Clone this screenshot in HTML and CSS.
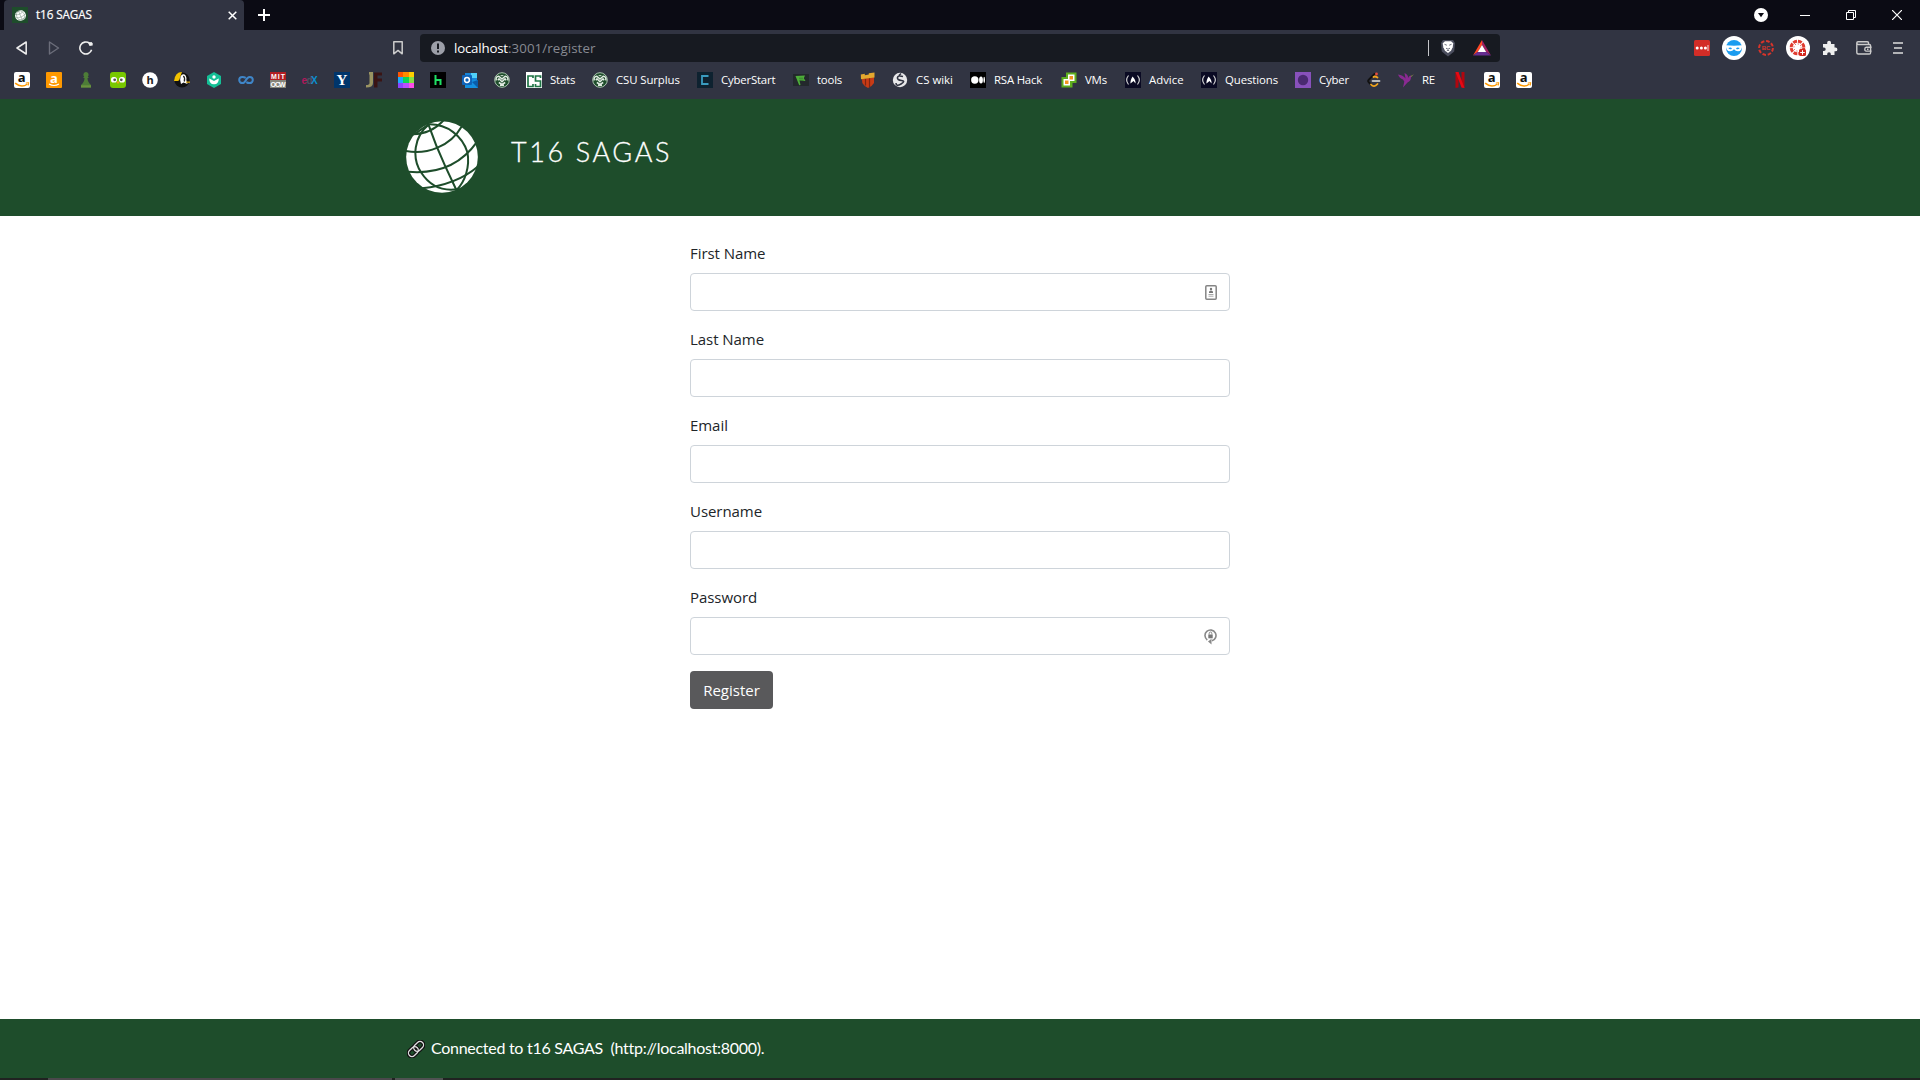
FILE: index.html
```html
<!DOCTYPE html>
<html lang="en">
<head>
<meta charset="utf-8">
<title>t16 SAGAS</title>
<link rel="stylesheet" href="styles.css">
</head>
<body>
<svg class="defs" aria-hidden="true">
  <symbol id="globe" viewBox="80 79 213 214">
    <circle cx="186.5" cy="186" r="106.5" fill="#fff"/>
    <g fill="none" stroke="#1e4d2b" stroke-width="6">
      <path d="M145 86Q168 153 196 213L232 290"/>
      <path d="M98 118Q154 119 192 76"/>
      <path d="M78 168C142 181 212 153 245 95"/>
      <path d="M86 230C170 237 242 210 290 142"/>
      <path d="M127 279C190 273 250 252 295 213"/>
      <path d="M147 89C104 125 95 187 125 233C151 273 188 288 232 282"/>
      <path d="M147 89C203 88 247 124 262 172C270 216 255 259 230 284"/>
      <path d="M147 89L108 116"/>
    </g>
  </symbol>
  <symbol id="amazon" viewBox="0 0 16 16" overflow="visible">
    <rect width="16" height="16" rx="2" fill="#fff"/>
    <text x="7.6" y="10.4" text-anchor="middle" class="fav-a">a</text>
    <path d="M1.2 11.2Q7.5 16.4 13.5 12" fill="none" stroke="#f90" stroke-width="1.5"/>
    <path d="M11.8 11.1l3-.5-.6 3" fill="none" stroke="#f90"/>
  </symbol>
  <symbol id="ram" viewBox="0 0 16 16">
    <circle cx="8" cy="8" r="7.3" fill="#1e4d2b" stroke="#a9c4ae" stroke-width="1"/>
    <g fill="none" stroke="#e3ece4" stroke-width="1.5">
      <path d="M2.200 8.500Q1.500 4.500 4.800 4.200L8 7l3.200-2.800Q14.500 4.500 13.800 8.500"/>
      <path d="M3.800 8.200L5 6.800l3 3 3-3 1.200 1.400"/>
      <path d="M6 13.300h4M4.800 10.500l3.200 1.800 3.200-1.800"/>
    </g>
    <path d="M6 3h4L8 4.600z" fill="#c5d6c8"/>
  </symbol>
  <symbol id="fcc" viewBox="0 0 16 16">
    <rect width="16" height="16" fill="#0a0a23"/>
    <path d="M3.500 3.500Q-.2 8 3.500 12.500M12.500 3.500Q16.200 8 12.500 12.500" fill="none" stroke="#ddd" stroke-width="1.100"/>
    <path d="M5.500 11.500Q5 9 7.500 4.500Q11 8 10.500 11.500L8.500 9Z" fill="#fff"/>
  </symbol>
</svg>

<div class="browser">
  <div class="tabstrip">
    <div class="tab">
      <span class="tab-icon"><svg width="11" height="11"><use href="#globe"/></svg></span>
      <span class="tab-title">t16 SAGAS</span>
      <svg class="tab-close" width="9" height="9" viewBox="0 0 9 9"><path d="M.7.7l7.600 7.600M8.300.7L.7 8.300" stroke="#fff" stroke-width="1.500"/></svg>
    </div>
    <svg class="new-tab" width="12" height="12" viewBox="0 0 12 12"><path d="M6 0v12M0 6h12" stroke="#fff" stroke-width="2"/></svg>
    <div class="window-controls">
      <svg width="14" height="14" viewBox="0 0 14 14"><circle cx="7" cy="7" r="7" fill="#fff"/><path d="M4 5h6L7 9.300z" fill="#0b0b14"/></svg>
      <svg width="10" height="10" viewBox="0 0 10 10"><path d="M0 5.500h10" stroke="#fff"/></svg>
      <svg width="10" height="10" viewBox="0 0 10 10" fill="none" stroke="#fff"><path d="M.5 2.500h7v7h-7zM2.500 2.500v-2h7v7h-2"/></svg>
      <svg width="10" height="10" viewBox="0 0 10 10"><path d="M0 0l10 10M10 0L0 10" stroke="#fff" stroke-width="1.200"/></svg>
    </div>
  </div>

  <div class="toolbar">
    <div class="nav">
      <svg width="12" height="14" viewBox="0 0 12 14"><path d="M10.200 1L1 7l9.200 6z" fill="none" stroke="#eee" stroke-width="1.500" stroke-linejoin="round"/></svg>
      <svg width="12" height="14" viewBox="0 0 12 14"><path d="M1.500 1l9 6-9 6z" fill="none" stroke="#6b6d7a" stroke-width="1.400" stroke-linejoin="round"/></svg>
      <svg width="14" height="14" viewBox="0 0 14 14"><path d="M10.500 2.200A6 6 0 1 0 12.600 8.800" fill="none" stroke="#eee" stroke-width="1.600"/><path d="M9 1.500l3.500-.4 1.300 1.300-.2 2.200-3.100.4z" fill="#eee"/></svg>
    </div>
    <svg class="bookmark-page" width="10" height="14" viewBox="0 0 10 14"><path d="M.8.8h8.400v12L5 9.400.8 12.800z" fill="none" stroke="#ccc" stroke-width="1.500" stroke-linejoin="round"/></svg>
    <div class="address">
      <svg width="14" height="14" viewBox="0 0 14 14"><circle cx="7" cy="7" r="7" fill="#9c9fa8"/><path d="M6 2.500h2v5.500H6zM6 9.500h2v2H6z" fill="#171a21"/></svg>
      <span class="url"><span class="url-host">localhost</span><span class="url-path">:3001/register</span></span>
      <span class="address-rule"></span>
      <svg class="shield" width="16" height="18" viewBox="0 0 16 18"><path d="M3 1h10l2 3-.8 8.500L8 17.500l-6.200-5L1 4z" fill="#4b4e5e"/><path d="M5 2.300h6l2.300 2-.6 4-1.700 3.500L8 14l-3-2.200-1.700-3.500-.6-4z" fill="#fff"/><path d="M4.500 5.300l2.300.9M11.500 5.300l-2.300.9M6 9.200l2 1 2-1M6.800 11.800L8 11.200l1.200.6" fill="none" stroke="#4b4e5e" stroke-width=".8"/></svg>
      <svg class="bat" width="18" height="16" viewBox="0 0 18 16"><path d="M9 0L0 15.500 5 11.700 9 5z" fill="#ff4724"/><path d="M9 0l9 15.500-5-3.800L9 5z" fill="#9e1f63"/><path d="M0 15.500h18l-5-3.800H5z" fill="#662d91"/><path d="M9 5l4.200 7H4.800z" fill="#fff"/></svg>
    </div>
    <div class="extensions">
      <svg width="16" height="16" viewBox="0 0 16 16"><rect width="16" height="16" rx="1.500" fill="#d32d27"/><g fill="#fff"><circle cx="3.200" cy="8" r="1.500"/><circle cx="7.400" cy="8" r="1.500"/><circle cx="11.400" cy="8" r="1.500"/><path d="M13.600 5h.8v6h-.8z"/></g></svg>
      <svg width="24" height="24" viewBox="0 0 24 24"><circle cx="12" cy="12" r="12" fill="#fff"/><circle cx="12" cy="12" r="8" fill="#1a9cf0"/><path d="M3.800 9.300Q12 10.200 20.200 9.300 20 15.300 16 15.300 13.500 15.300 12 13.300 10.500 15.300 8 15.300 4 15.300 3.800 9.300z" fill="#fff"/><path d="M6.300 12q2.700-1.300 3.700.7-2.200 1.500-3.700-.7zM17.700 12q-2.700-1.300-3.700.7 2.200 1.500 3.700-.7z" fill="#1a9cf0"/></svg>
      <svg width="16" height="16" viewBox="0 0 16 16"><circle cx="8" cy="8" r="6.900" fill="none" stroke="#d8342a" stroke-width="2" stroke-dasharray="3.600 1.800"/><text x="8" y="10.300" text-anchor="middle" class="ext-bc">BC</text></svg>
      <svg width="24" height="24" viewBox="0 0 24 24"><circle cx="12" cy="12" r="12" fill="#fff"/><circle cx="11.500" cy="11.500" r="6.300" fill="none" stroke="#e03c30" stroke-width="3" stroke-dasharray="3.900 1"/><circle cx="11.500" cy="11.500" r="3.600" fill="none" stroke="#e03c30" stroke-dasharray="1 1.800"/><rect x="13" y="13" width="7" height="7" rx="1.500" fill="#d3261c"/><path d="M16.500 14.200v4.600M14.200 16.500h4.600" stroke="#fff"/></svg>
      <svg width="16" height="16" viewBox="0 0 16 16"><path d="M1 4h4.200V2.600a1.900 1.900 0 0 1 3.800 0V4h3.500v3.500h1a1.900 1.900 0 0 1 0 3.800h-1V15H8.800v-1a1.800 1.800 0 0 0-3.600 0v1H1v-4h1a1.700 1.700 0 0 0 0-3.400H1z" fill="#eee"/></svg>
      <svg width="16" height="14" viewBox="0 0 16 14"><g fill="none" stroke="#ccc" stroke-width="1.400"><path d="M12.500 3.500V2q0-1.200-1.200-1.200H2Q.8.800.8 2v9.500q0 1.500 1.500 1.500h11q1.300 0 1.300-1.300V4.800q0-1.300-1.300-1.300H2.500Q.8 3.500.8 2"/><path d="M15.500 6.300h-5.300q-1.400 0-1.400 1.900t1.400 1.900h5.300M11 8.200h1.500"/></g></svg>
      <svg width="10" height="12" viewBox="0 0 10 12"><path d="M0 1h10M1 6h8M0 11h10" stroke="#ddd" stroke-width="1.600"/></svg>
    </div>
  </div>

  <div class="bookmarks">
    <svg><use href="#amazon"/></svg>
    <svg viewBox="0 0 16 16"><rect width="16" height="16" rx="1" fill="#f90"/><text x="8" y="10.800" text-anchor="middle" class="fav-a fav-white">a</text><path d="M3 12Q8 15 13 12" fill="none" stroke="#fff" stroke-width="1.100"/></svg>
    <svg viewBox="0 0 16 16"><path d="M8 0a2.800 2.800 0 0 1 1.800 4.800L11 6H9.500Q9.500 10 13 13v2.500H3V13Q6.500 10 6.500 6H5l1.200-1.200A2.800 2.800 0 0 1 8 0z" fill="#4d7c37"/><path d="M3 13.300h10v2.200H3z" fill="#69923e"/></svg>
    <svg viewBox="0 0 16 16"><rect width="16" height="16" rx="3" fill="#78c800"/><rect x="1" y="5" width="6" height="5.500" rx="2.600" fill="#fff"/><rect x="9" y="5" width="6" height="5.500" rx="2.600" fill="#fff"/><circle cx="4.700" cy="7.800" r="1.400" fill="#555"/><circle cx="11.300" cy="7.800" r="1.400" fill="#555"/><path d="M6.200 9.500h3.600L8 12z" fill="#f6a01a"/></svg>
    <svg viewBox="0 0 16 16"><circle cx="8" cy="8" r="7.800" fill="#fff"/><text x="8" y="12" text-anchor="middle" class="fav-h">h</text></svg>
    <svg viewBox="0 0 16 16"><circle cx="8" cy="8" r="7.600" fill="#111"/><path d="M0 9Q1 0 8 0L6 5.500Q5.500 9 3.500 9z" fill="#f2c200"/><path d="M6.500 4.500Q8 1.500 10.500 2.500 13 4.500 12.300 8L13.500 12 9.500 10.500 7 12Q5.500 8 6.500 4.500z" fill="#fff"/><path d="M9.300 4q2 1.500 1 5.500" stroke="#222" fill="none" stroke-width="1.300"/><path d="M12 9.500h4v1.300h-4z" fill="#d8a512"/></svg>
    <svg viewBox="0 0 16 16"><path d="M8 0l7 4v8l-7 4-7-4V4z" fill="#14bf96"/><path d="M8 9Q12.800 6 12.800 6.500 12.800 12.300 8 12.300T3.200 6.500Q3.200 6 8 9z" fill="#fff"/><circle cx="8" cy="5" r="1.700" fill="#fff"/></svg>
    <svg viewBox="0 0 16 16"><path d="M7.700 5.900Q6.200 4.900 4.300 4.900a3.100 3.100 0 0 0 0 6.200Q6.500 11.100 8 8T11.700 4.900a3.100 3.100 0 0 1 0 6.200Q9.800 11.100 8.300 10.100" fill="none" stroke="#3f86c9" stroke-width="2"/></svg>
    <svg viewBox="0 0 16 16"><path d="M0 0h16v8H0z" fill="#b01e23"/><path d="M0 8h16v8H0z" fill="#85857b"/><text x="8" y="7" text-anchor="middle" class="fav-mit" textLength="14">MIT</text><text x="8" y="15" text-anchor="middle" class="fav-mit" textLength="15">OCW</text></svg>
    <svg viewBox="0 0 16 16"><text x="-.5" y="11.500" class="fav-edx fill-plum">e</text><text x="4.500" y="11.500" class="fav-edx fill-slate">d</text><text x="9" y="12" class="fav-edx fill-sky">X</text></svg>
    <svg viewBox="0 0 16 16"><rect width="16" height="16" fill="#00356b"/><text x="8" y="13.200" text-anchor="middle" class="fav-y">Y</text></svg>
    <svg viewBox="0 0 16 16"><path d="M3 0h4v11q0 4.500-7 4.500V13q3.500 0 3.500-2V2.500H3z" fill="#9a9462"/><path d="M8 .5h8v3h-4.500v3H16v3h-4.500v6H8z" fill="#3a1414"/></svg>
    <svg viewBox="0 0 16 16" shape-rendering="crispEdges"><path d="M0 0h6v5H0z" fill="#ff5400"/><path d="M5 0h6v5H5z" fill="#ff8a00"/><path d="M11 0h5v5h-5z" fill="#ffcf00"/><path d="M0 5h6v6H0z" fill="#1caaff"/><path d="M5 5h6v6H5z" fill="#0fd353"/><path d="M11 5h5v6h-5z" fill="#85e043"/><path d="M0 11h6v5H0z" fill="#8c45ff"/><path d="M5 11h6v5H5z" fill="#b84dff"/><path d="M11 11h5v5h-5z" fill="#ff4de8"/></svg>
    <svg viewBox="0 0 16 16"><rect width="16" height="16"/><path d="M5.500 3v10M5.500 8h5M10.500 7v6" stroke="#1fdf64" stroke-width="2" fill="none"/></svg>
    <svg viewBox="0 0 16 16"><path d="M3 1h12v10H3z" fill="#1685d8"/><path d="M9 1h6v5H9z" fill="#50d0f8"/><path d="M3 8h13v8H3z" fill="#1490df"/><path d="M10 10l6-2v8z" fill="#0a5ca8"/><rect y="3" width="10" height="10" rx="1" fill="#0f63b8"/><circle cx="5" cy="8" r="2.400" fill="none" stroke="#fff" stroke-width="1.500"/></svg>
    <svg><use href="#ram"/></svg>
    <svg viewBox="0 0 16 16"><rect width="16" height="16" fill="#fff"/><path d="M7 6V4H2v10.500h5V12M14.500 6V4H9.500v5h5v5.500h-5V12" fill="none" stroke="#1f7546" stroke-width="1.700"/></svg><span class="bm bm-stats">Stats</span>
    <svg><use href="#ram"/></svg><span class="bm bm-surplus">CSU Surplus</span>
    <svg viewBox="0 0 16 16"><rect width="16" height="16" fill="#0e2230"/><path d="M11.500 4H5v8h6.500" fill="none" stroke="#3a9cc0" stroke-width="1.800"/></svg><span class="bm bm-cyberstart">CyberStart</span>
    <svg viewBox="0 0 16 16"><rect y="2" width="16" height="12" fill="#23282c"/><path d="M2.500 4l9.500-.5-1.200 2.700L12.500 9 6.500 8.500l1 4.500-1.300.3z" fill="#4eae3a"/><path d="M6 6.200h4M6.500 8.200h4" stroke="#2b6a26" stroke-width=".6"/></svg><span class="bm bm-tools">tools</span>
    <svg viewBox="0 0 16 16"><path d="M2 7l12-2v6q-2 3.500-6 5-4-2-5.700-5z" fill="#c73b16"/><path d="M5.500 6.500v7M9.500 6v9" stroke="#7e2412" stroke-width="1.200"/><path d="M.8 2.500l4-.7v1.400l4-.6V1.200L14.500.5V5.500L1 7.200z" fill="#e4a82e"/></svg>
    <svg viewBox="0 0 16 16"><circle cx="8" cy="8" r="7.200" fill="#e8e8ea"/><path d="M11 4.500Q6 3 5.500 5.500T9.500 8.500 9 12 4 11M9 1.500L7 3.500" fill="none" stroke="#313442" stroke-width="1.600"/></svg><span class="bm bm-wiki">CS wiki</span>
    <svg viewBox="0 0 16 16"><rect width="16" height="16"/><g fill="#fff"><circle cx="4.800" cy="8" r="3.700"/><ellipse cx="11" cy="8" rx="1.900" ry="3.500"/><ellipse cx="14.200" cy="8" rx=".8" ry="3.200"/></g></svg><span class="bm bm-rsa">RSA Hack</span>
    <svg viewBox="0 0 16 16"><path d="M5 .5h10.500V11h-4v4.500H.5V5H5z" fill="#5eae1e"/><path d="M7 2.500h6.500V9H7z" fill="#fff"/><path d="M2.500 7H9v6.500H2.500z" fill="#fff"/><path d="M8.500 4h3.500v3.500H8.500z" fill="#f29320"/><path d="M4 8.500h3.500V12H4z" fill="#f29320"/></svg><span class="bm bm-vms">VMs</span>
    <svg><use href="#fcc"/></svg><span class="bm bm-advice">Advice</span>
    <svg><use href="#fcc"/></svg><span class="bm bm-questions">Questions</span>
    <svg viewBox="0 0 16 16"><rect width="16" height="16" fill="#8851bb"/><circle cx="8" cy="8" r="5.200" fill="#4a2a70"/></svg><span class="bm bm-cyber">Cyber</span>
    <svg viewBox="0 0 16 16" fill="none" stroke-width="1.800" stroke-linecap="round"><path d="M8.500 2L2.500 8Q1.500 9 2.500 10L5 12.500" stroke="#111"/><path d="M11.500 5.500Q9 3.800 7.500 5M5 12.500Q8 16 11.500 12" stroke="#f2a51d"/><path d="M6.500 9h7" stroke="#bbb"/><circle cx="10.500" cy="2" r="1.400" fill="#e74c3c" stroke="none"/></svg>
    <svg viewBox="0 0 16 16"><path d="M0 2.500Q5 3 7.500 6.500L6.500 1Q10.500 3 10 6 11 3.500 13 3.500L13 5Q13 9 9.500 10.500L5 15.500 6 11Q7 9.500 5 7.500 1.500 6.500 0 2.500z" fill="#8a2a92"/><path d="M12.500 4L16 2.200 13 5.200z" fill="#7d7a4a"/></svg><span class="bm bm-re">RE</span>
    <svg viewBox="0 0 16 16"><path d="M3.500 0h3v15.500l-3 .5zM9.500 0h3v16l-3-.5z" fill="#b1060f"/><path d="M3.500 0h3l6 16-3-.5z" fill="#e50914"/></svg>
    <svg><use href="#amazon"/></svg>
    <svg><use href="#amazon"/></svg>
  </div>
</div>

<header class="site-header">
  <svg class="logo"><use href="#globe"/></svg>
  <h1 class="site-title">T16 SAGAS</h1>
</header>

<main class="page">
  <form class="form">
    <div class="group"><label class="label" for="first">First Name</label>
      <div class="field"><input class="input" id="first">
        <svg width="12" height="15" viewBox="0 0 12 15"><rect x=".8" y=".8" width="10.400" height="13.400" rx="1" fill="#fff" stroke="#858585" stroke-width="1.500"/><circle cx="6" cy="4" r="1.200" fill="#777"/><path d="M4 8V7q0-1.500 2-1.500T8 7v1z" fill="#777"/><path d="M3.500 9.500h5M3.500 11.200h5" stroke="#aaa"/></svg></div></div>
    <div class="group"><label class="label" for="last">Last Name</label><div class="field"><input class="input" id="last"></div></div>
    <div class="group"><label class="label" for="email">Email</label><div class="field"><input class="input" id="email"></div></div>
    <div class="group"><label class="label" for="user">Username</label><div class="field"><input class="input" id="user"></div></div>
    <div class="group"><label class="label" for="pass">Password</label>
      <div class="field"><input class="input" id="pass" type="password">
        <svg width="13" height="17" viewBox="0 0 13 17"><path d="M3.300 12A5.500 5.500 0 1 1 8 12.800" fill="none" stroke="#888" stroke-width="1.600"/><path d="M7.500 10.800v5.600L4 13.600z" fill="#888"/><rect x="4.300" y="6.500" width="4.400" height="3.800" fill="#777"/><path d="M5.200 6.500V5.300a1.300 1.300 0 0 1 2.600 0v1.200" fill="none" stroke="#888"/></svg></div></div>
    <button class="button" type="button">Register</button>
  </form>
</main>

<footer class="site-footer">
  <svg width="18" height="18" viewBox="0 0 18 18" fill="none"><g transform="rotate(-45 9 9)"><g stroke="#111" stroke-width="3.800"><rect x="-.2" y="5.500" width="11" height="7" rx="3.500"/><rect x="7.200" y="5.500" width="11" height="7" rx="3.500"/></g><g stroke="#ddd" stroke-width="1.300"><rect x="-.2" y="5.500" width="11" height="7" rx="3.500"/><rect x="7.200" y="5.500" width="11" height="7" rx="3.500"/></g></g></svg>
  <span class="status">Connected to t16 SAGAS&nbsp; (http://localhost:8000).</span>
</footer>
<div class="taskbar"><span class="task-search"></span><span class="task-active"></span></div>
</body>
</html>
```
FILE: styles.css
```css
* { box-sizing: border-box; }

body {
  margin: 0;
  height: 1080px;
  display: flex;
  flex-direction: column;
  overflow: hidden;
  background: #fff;
  color: #212529;
  font-family: "Open Sans", "Noto Sans", sans-serif;
}

svg { display: block; flex: none; }
.defs { position: absolute; width: 0; height: 0; overflow: visible; }

/* Browser window */
.browser { height: 99px; background: #313442; color: #fff; }

.tabstrip { display: flex; align-items: center; height: 30px; padding: 0 18px 0 4px; background: #0b0b14; }
.tab { display: flex; align-items: center; width: 240px; height: 30px; padding: 0 7px 0 8px; background: #313442; border-radius: 4px 4px 0 0; }
.tab-icon { display: grid; place-items: center; width: 16px; height: 16px; margin-right: 8px; background: #1e4d2b; }
.tab-title { padding-bottom: 2px; font-size: 11.7px; letter-spacing: -.1px; -webkit-text-stroke: .2px #fff; }
.tab-close { margin-left: auto; }
.new-tab { margin-left: 14px; }
.window-controls { display: flex; align-items: center; margin-left: auto; gap: 36px; padding-bottom: 1px; }
.window-controls svg:first-child { margin-right: -4px; }

.toolbar { display: flex; align-items: center; height: 36px; padding: 0 17px 0 16px; }
.nav { display: flex; align-items: center; width: 376px; gap: 20px; }
.nav svg:last-child { margin-left: -1px; }
.bookmark-page { margin-left: 1px; }
.address { display: flex; align-items: center; width: 1080px; height: 28px; margin-left: 17px; padding: 0 9px 0 11px; background: #171a21; border-radius: 4px; }
.url { margin-left: 9px; font-size: 13.3px; line-height: 20px; white-space: nowrap; }
.url-host { letter-spacing: -.2px; }
.url-path { color: #878a92; letter-spacing: .1px; }
.address-rule { width: 1px; height: 16px; margin-left: auto; background: #c5c6ca; }
.shield { margin-left: 11px; }
.bat { margin-left: 17px; }
.extensions { display: flex; align-items: center; margin-left: auto; gap: 16px; }
.extensions svg:nth-child(2), .extensions svg:nth-child(4) { margin: 0 -4px; }
.extensions svg:nth-child(6) { margin-left: 2px; }
.extensions svg:last-child { margin-left: 5px; }

.bookmarks { display: flex; align-items: center; height: 28px; padding-left: 14px; gap: 16px; }
.bookmarks svg { width: 16px; height: 16px; overflow: visible; }
.bm { margin-left: -8px; font-size: 11.4px; letter-spacing: -.2px; line-height: 16px; white-space: nowrap; }
.bm-stats { width: 26px; }
.bm-surplus { width: 65px; letter-spacing: -.1px; }
.bm-cyberstart { width: 56px; }
.bm-tools { width: 27px; }
.bm-wiki { width: 38px; letter-spacing: 0; }
.bm-rsa { width: 51px; }
.bm-vms { width: 24px; }
.bm-advice { width: 36px; letter-spacing: 0; }
.bm-questions { width: 54px; letter-spacing: -.1px; }
.bm-cyber { width: 31px; }
.bm-re { width: 14px; }

.fav-a { font: bold 13px "Open Sans", sans-serif; fill: #111; }
.fav-white { fill: #fff; }
.fav-h { font: bold 11px "Open Sans", sans-serif; fill: #222; }
.fav-mit { font: bold 7px "Liberation Sans", sans-serif; fill: #fff; }
.fav-edx { font: bold 10px "Liberation Sans", sans-serif; }
.fill-plum { fill: #b0195b; }
.fill-slate { fill: #4b5365; }
.fill-sky { fill: #0b8fd0; }
.fav-y { font: bold 15px "Liberation Serif", serif; fill: #fff; }
.ext-bc { font: bold 6px "Liberation Sans", sans-serif; fill: #d8342a; }

/* Site */
.site-header { display: flex; height: 117px; padding: 22px 0 0 406px; background: #1e4d2b; color: #fff; }
.logo { width: 72px; height: 72px; }
.site-title { margin: 15px 0 0 33px; font: 300 27px/32px Lato, sans-serif; letter-spacing: 2.600px; -webkit-text-stroke: .3px #fff; }

.page { flex: 1; padding-top: 25px; }
.form { width: 540px; margin: 0 auto; }
.group { margin-bottom: 16px; }
.label { display: block; margin-bottom: 8px; font-size: 15px; line-height: 24px; letter-spacing: -.05px; }
.field { display: flex; align-items: center; height: 38px; padding-right: 12px; border: 1px solid #ced4da; border-radius: 4px; }
.input { flex: 1; height: 36px; padding: 6px 12px; border: 0; background: none; outline: 0; }
.button { display: block; width: 83px; height: 38px; padding: 0; border: 0; border-radius: 4px; background: #59595b; color: #fff; font: 15px/24px "Open Sans", sans-serif; }

.site-footer { display: flex; align-items: center; height: 59px; padding-left: 407px; background: #1e4d2b; color: #fff; }
.status { margin-left: 6px; padding-bottom: 2px; font: 16px/24px Lato, sans-serif; letter-spacing: -.28px; }

.taskbar { display: flex; height: 2px; padding-left: 48px; gap: 3px; background: #202221; }
.task-search { width: 344px; background: #4a484b; }
.task-active { width: 48px; background: #505252; }
```
